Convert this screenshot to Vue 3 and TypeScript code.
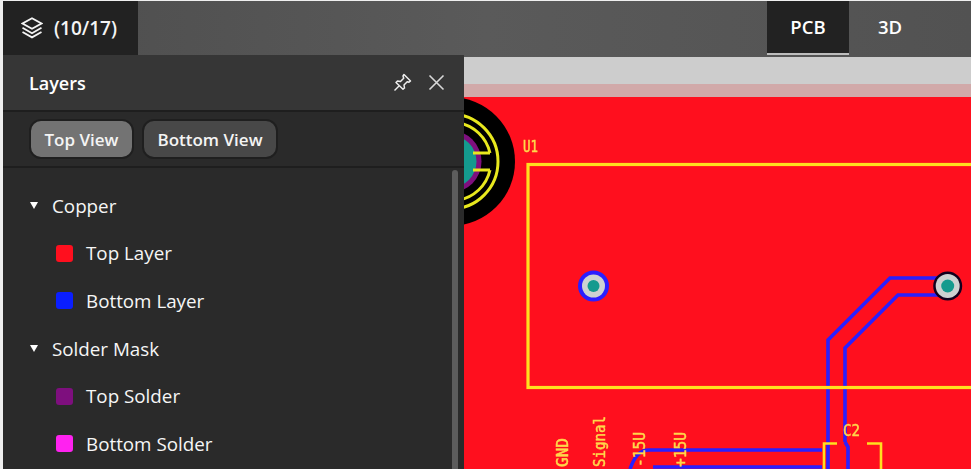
<script setup lang="ts">
interface Layer {
  name: string;
  color?: string;
}

const layers: Layer[] = [
  { name: 'Copper' },
  { name: 'Top Layer', color: '#ff0f1e' },
  { name: 'Bottom Layer', color: '#0a1eff' },
  { name: 'Solder Mask' },
  { name: 'Top Solder', color: '#7e0f7e' },
  { name: 'Bottom Solder', color: '#ff22f0' },
];
</script>

<template>
  <div class="viewer">
    <header class="topbar">
      <button class="layers-btn">
        <svg class="stack-icon" width="22" height="22" viewBox="0 0 22 22" fill="none" stroke="#f4f4f4" stroke-width="1.8" stroke-linejoin="miter">
          <path d="M11 1.200 20.500 6.500 11 11.800 1.500 6.500Z" />
          <path d="M1.500 10.800 11 16.200 20.500 10.800" />
          <path d="M1.500 15 11 20.400 20.500 15" />
        </svg>
        <span>(10/17)</span>
      </button>
      <div class="tabs">
        <div class="tab active">PCB</div>
        <div class="tab">3D</div>
      </div>
    </header>

    <main class="stage">
      <svg class="board" viewBox="0 57 968 412" width="968" height="412" fill="none">
        <rect x="0" y="57" width="968" height="27" fill="#cdcdcd" />
        <rect x="0" y="84" width="968" height="13" fill="#d1a9a9" />
        <rect x="0" y="97" width="968" height="372" fill="#ff0f1e" />

        <circle cx="447.500" cy="161.500" r="64.500" fill="#000" />
        <circle cx="447.500" cy="161.500" r="31" fill="#7e0f7e" />
        <circle cx="447.500" cy="161.500" r="26" fill="#149a8e" />
        <circle cx="447.500" cy="161.500" r="47.500" stroke="#e8e81e" stroke-width="3" />
        <path d="M470 153H487M470 170H487M487 153A39.500 39.500 0 0 0 455 122.700M487 170A39.500 39.500 0 0 1 455 200.300" stroke="#e8e81e" stroke-width="3" />

        <path d="M825 469V340L887 278H945M842 442V348L895 295H945" stroke="#2a1fff" stroke-width="3.600" />
        <path d="M627 469C631 458 636 450 646 450H819M650 467H819M842 442 845 447V469" stroke="#2a1fff" stroke-width="3.600" />

        <rect x="525" y="164.500" width="460" height="223" stroke="#ffe01f" stroke-width="3.200" />
        <path d="M834 443.500H821V469M864 443.500H878V469" stroke="#ffe01f" stroke-width="2.600" />

        <g class="silk">
          <text x="520" y="152" textLength="15" lengthAdjust="spacingAndGlyphs">U1</text>
          <text x="840" y="436" textLength="17" lengthAdjust="spacingAndGlyphs">C2</text>
          <text transform="translate(565 467) rotate(-90)" textLength="29" lengthAdjust="spacingAndGlyphs">GND</text>
          <text transform="translate(602 467) rotate(-90)" textLength="51" lengthAdjust="spacingAndGlyphs">Signal</text>
          <text transform="translate(642 467) rotate(-90)" textLength="35" lengthAdjust="spacingAndGlyphs">-15U</text>
          <text transform="translate(683 467) rotate(-90)" textLength="35" lengthAdjust="spacingAndGlyphs">+15U</text>
        </g>

        <circle cx="590.500" cy="286" r="15.500" fill="#2a1fff" />
        <circle cx="590.500" cy="286" r="11.500" fill="#cdd2d2" />
        <circle cx="590.500" cy="286" r="6" fill="#149a8e" />
        <circle cx="944.700" cy="286" r="14.500" fill="#12001e" />
        <circle cx="944.700" cy="286" r="12" fill="#cdd2d2" />
        <circle cx="944.700" cy="286" r="6.500" fill="#149a8e" />
      </svg>

      <aside class="panel">
        <div class="panel-head">
          <span class="panel-title">Layers</span>
          <div class="panel-actions">
            <svg width="19" height="19" viewBox="0 0 19 19" fill="none" stroke="#eeeeee" stroke-width="1.500" stroke-linejoin="round">
              <path d="M11 1.500 17.500 8 16 9.200 14.200 8.800 11 12 11.500 15 10 16.300 3 9.500 4.500 8 7.500 8.500 10.700 5.300 10 3Z" />
              <path d="M6 13 1.500 17.500" />
            </svg>
            <svg width="17" height="17" viewBox="0 0 17 17" stroke="#d8d8d8" stroke-width="1.600">
              <path d="M1.500 1.500 15.500 15.500M15.500 1.500 1.500 15.500" />
            </svg>
          </div>
        </div>
        <div class="view-btns">
          <button class="view-btn selected">Top View</button>
          <button class="view-btn">Bottom View</button>
        </div>
        <div class="layer-list">
          <div v-for="l in layers" :key="l.name" class="layer-row" :class="{ group: !l.color }">
            <span v-if="!l.color" class="caret"></span>
            <span v-else class="swatch" :style="{ background: l.color }"></span>
            <span>{{ l.name }}</span>
          </div>
          <div class="scroll-thumb"></div>
        </div>
      </aside>
    </main>
  </div>
</template>

<style>
html,
body {
  margin: 0;
  background: #efefef;
  overflow: hidden;
}
</style>

<style scoped>
.viewer {
  width: 971px;
  height: 469px;
  box-sizing: border-box;
  padding: 1px 0 0 3px;
  display: flex;
  flex-direction: column;
  overflow: hidden;
  font-family: 'Open Sans', 'Noto Sans', sans-serif;
  color: #fff;
}

.topbar {
  height: 56px;
  flex: none;
  display: flex;
  justify-content: space-between;
  align-items: flex-start;
  background: linear-gradient(to right, #4d4d4d, #5a5a5a 50%, #525252);
}

.layers-btn {
  width: 135px;
  height: 54px;
  display: flex;
  align-items: center;
  gap: 11px;
  padding: 0 0 0 18px;
  border: none;
  background: #222;
  color: #f4f4f4;
  font: 600 19px 'Open Sans', sans-serif;
}

.tabs {
  display: flex;
  margin-right: 40px;
}

.tab {
  width: 82px;
  height: 52px;
  line-height: 52px;
  text-align: center;
  font-size: 18.500px;
  font-weight: 600;
  border-bottom: 2px solid transparent;
}

.tab.active {
  background: #222;
  border-bottom-color: #bdbdbd;
}

.stage {
  position: relative;
  flex: 1;
  background: #ff0f1e;
}

.board {
  display: block;
  filter: blur(0.4px);
}

.silk text {
  font: 15px 'DejaVu Sans Mono', monospace;
  fill: #ffd84a;
  stroke: #ffd84a;
  stroke-width: 0.5px;
}

.panel {
  position: absolute;
  top: -2px;
  left: 0;
  bottom: 0;
  width: 461px;
  display: flex;
  flex-direction: column;
  background: #2a2a2a;
}

.panel-head {
  height: 55px;
  flex: none;
  display: flex;
  align-items: center;
  justify-content: space-between;
  padding: 0 19px 0 26px;
  background: #363636;
  border-bottom: 2px solid #1e1e1e;
}

.panel-title {
  font-size: 18px;
  font-weight: 600;
}

.panel-actions {
  display: flex;
  align-items: center;
  gap: 16px;
}

.view-btns {
  height: 54px;
  flex: none;
  display: flex;
  align-items: center;
  gap: 8px;
  padding-left: 26px;
  border-bottom: 2px solid #1e1e1e;
}

.view-btn {
  height: 40px;
  padding: 0 13.500px;
  border: 2px solid #1f1f1f;
  border-radius: 12px;
  background: #484848;
  color: #f4f4f4;
  font: 600 17px 'Open Sans', sans-serif;
}

.view-btn.selected {
  background: #737373;
}

.layer-list {
  position: relative;
  flex: 1;
  padding-top: 14px;
}

.layer-row {
  height: 47.600px;
  display: flex;
  align-items: center;
  gap: 13px;
  padding-left: 53px;
  font-size: 18.800px;
  font-weight: 500;
  color: #f6f6f6;
}

.layer-row.group {
  padding-left: 27px;
  gap: 14px;
}

.caret {
  width: 0;
  height: 0;
  border-left: 4.500px solid transparent;
  border-right: 4.500px solid transparent;
  border-top: 7px solid #fff;
}

.swatch {
  width: 17px;
  height: 17px;
  border-radius: 3px;
}

.scroll-thumb {
  position: absolute;
  top: 2px;
  bottom: 0;
  right: 6px;
  width: 6px;
  border-radius: 3px 3px 0 0;
  background: #5c5c5c;
}
</style>
